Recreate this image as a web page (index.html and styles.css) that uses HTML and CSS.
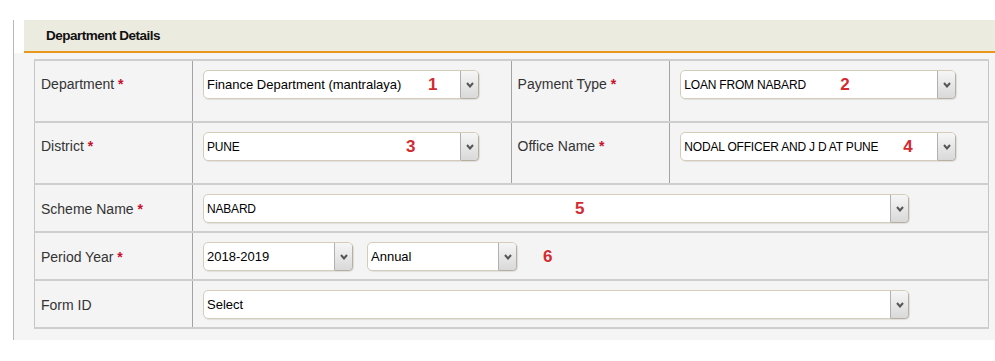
FILE: index.html
```html
<!DOCTYPE html>
<html>
<head>
    <meta charset="UTF-8">
    <meta name="viewport" content="width=device-width, initial-scale=1.0">
    <title>Department Details</title>
    <link rel="stylesheet" href="styles.css">
</head>
<body>

<div class="panel">
    <div class="panel-title">Department Details</div>

    <div class="panel-body">
        <table class="form-table">
            <tr class="row-tall">
                <td class="lbl"><span class="lbl-text">Department <b class="req">*</b></span></td>
                <td class="val">
                    <div class="sel w-md">
                        <select><option>Finance Department (mantralaya)</option></select>
                        <span class="arrow"><svg width="8" height="6" viewBox="0 0 8 6"><polyline points="1,1 4,4.5 7,1" fill="none" stroke="#555" stroke-width="2"/></svg></span>
                        <span class="mark m1">1</span>
                    </div>
                </td>
                <td class="lbl lbl-mid"><span class="lbl-text">Payment Type <b class="req">*</b></span></td>
                <td class="val">
                    <div class="sel w-md">
                        <select class="caps"><option>LOAN FROM NABARD</option></select>
                        <span class="arrow"><svg width="8" height="6" viewBox="0 0 8 6"><polyline points="1,1 4,4.5 7,1" fill="none" stroke="#555" stroke-width="2"/></svg></span>
                        <span class="mark m2">2</span>
                    </div>
                </td>
            </tr>
            <tr class="row-tall">
                <td class="lbl"><span class="lbl-text">District <b class="req">*</b></span></td>
                <td class="val">
                    <div class="sel w-md">
                        <select class="caps"><option>PUNE</option></select>
                        <span class="arrow"><svg width="8" height="6" viewBox="0 0 8 6"><polyline points="1,1 4,4.5 7,1" fill="none" stroke="#555" stroke-width="2"/></svg></span>
                        <span class="mark m3">3</span>
                    </div>
                </td>
                <td class="lbl lbl-mid"><span class="lbl-text">Office Name <b class="req">*</b></span></td>
                <td class="val">
                    <div class="sel w-md">
                        <select class="caps"><option>NODAL OFFICER AND J D AT PUNE</option></select>
                        <span class="arrow"><svg width="8" height="6" viewBox="0 0 8 6"><polyline points="1,1 4,4.5 7,1" fill="none" stroke="#555" stroke-width="2"/></svg></span>
                        <span class="mark m4">4</span>
                    </div>
                </td>
            </tr>
            <tr class="row-short">
                <td class="lbl">Scheme Name <b class="req">*</b></td>
                <td class="val" colspan="3">
                    <div class="sel w-lg">
                        <select class="caps"><option>NABARD</option></select>
                        <span class="arrow"><svg width="8" height="6" viewBox="0 0 8 6"><polyline points="1,1 4,4.5 7,1" fill="none" stroke="#555" stroke-width="2"/></svg></span>
                        <span class="mark m5">5</span>
                    </div>
                </td>
            </tr>
            <tr class="row-short">
                <td class="lbl">Period Year <b class="req">*</b></td>
                <td class="val" colspan="3">
                    <div class="inline-group">
                        <div class="sel w-sm">
                            <select><option>2018-2019</option></select>
                            <span class="arrow"><svg width="8" height="6" viewBox="0 0 8 6"><polyline points="1,1 4,4.5 7,1" fill="none" stroke="#555" stroke-width="2"/></svg></span>
                        </div>
                        <div class="sel w-sm">
                            <select><option>Annual</option></select>
                            <span class="arrow"><svg width="8" height="6" viewBox="0 0 8 6"><polyline points="1,1 4,4.5 7,1" fill="none" stroke="#555" stroke-width="2"/></svg></span>
                        </div>
                        <span class="mark-flow">6</span>
                    </div>
                </td>
            </tr>
            <tr class="row-short">
                <td class="lbl">Form ID</td>
                <td class="val" colspan="3">
                    <div class="sel w-lg">
                        <select><option>Select</option></select>
                        <span class="arrow"><svg width="8" height="6" viewBox="0 0 8 6"><polyline points="1,1 4,4.5 7,1" fill="none" stroke="#555" stroke-width="2"/></svg></span>
                    </div>
                </td>
            </tr>
        </table>
    </div>
</div>

</body>
</html>
```

FILE: styles.css
```css
body {
    margin: 0;
    background-color: #ffffff;
    font-family: "Liberation Sans", Arial, sans-serif;
    color: #333;
}

.panel {
    margin: 20px 0 0 13px;
    border-left: 1px solid #b8b8b8;
    height: 320px;
    box-sizing: border-box;
}

.panel-title {
    margin-left: 10px;
    height: 31px;
    line-height: 31px;
    padding-left: 22px;
    background-color: #ecebdf;
    border-bottom: 2px solid #e8961c;
    font-size: 13.5px;
    font-weight: bold;
    letter-spacing: -0.5px;
    color: #111;
}

.panel-body {
    background-color: #f5f5f5;
    padding: 6px 6px 12px 20px;
}

.form-table {
    border-collapse: collapse;
    width: 955px;
    border: 1px solid #c6c6c6;
}

.form-table td {
    border-top: 2px solid #cecece;
    border-bottom: 2px solid #cecece;
    background-color: #f4f4f4;
}

.form-table td.lbl {
    width: 152px;
    padding-left: 6px;
    border-right: 1px solid #a3a3a3;
    font-size: 14px;
    color: #333;
}

.form-table td.lbl-mid {
    border-left: 1px solid #a3a3a3;
}

.form-table td.val {
    padding-left: 10px;
}

.row-tall td {
    vertical-align: top;
    padding-top: 9px;
    padding-bottom: 22px;
}

.row-tall td.val {
    width: 307px;
}

.lbl-text {
    display: block;
    line-height: 29px;
}

.row-short td {
    vertical-align: middle;
    padding-top: 9px;
    padding-bottom: 8px;
}

.req {
    color: #c8102e;
}

.sel {
    position: relative;
    display: flex;
    height: 29px;
    box-sizing: border-box;
    background-color: #ffffff;
    border: 1px solid #d4ccb8;
    border-radius: 5px;
    box-shadow: 1px 1px 1px rgba(0, 0, 0, 0.08);
}

.w-sm {
    width: 150px;
}

.w-md {
    width: 276px;
}

.w-lg {
    width: 706px;
}

.sel select {
    flex: 1;
    min-width: 0;
    appearance: none;
    -webkit-appearance: none;
    border: none;
    background: transparent;
    font-family: "Liberation Sans", Arial, sans-serif;
    font-size: 13px;
    color: #000;
    padding: 0 3px;
    outline: none;
}

.sel select.caps {
    font-size: 12px;
    letter-spacing: -0.2px;
}

.arrow {
    width: 17px;
    display: flex;
    align-items: center;
    justify-content: center;
    border-left: 1px solid #b0b0b0;
    border-radius: 0 4px 4px 0;
    background: linear-gradient(#f6f6f6, #d9d9d9);
    box-shadow: 1px 1px 1px rgba(0, 0, 0, 0.15);
}

.inline-group {
    display: flex;
    align-items: center;
    gap: 14px;
}

.mark,
.mark-flow {
    color: #d42a30;
    font-weight: bold;
    font-size: 17px;
    line-height: 29px;
}

.mark {
    position: absolute;
    top: -1px;
}

.mark-flow {
    margin-left: 12px;
}

.m1 { left: 224px; }
.m2 { left: 159px; }
.m3 { left: 202px; }
.m4 { left: 222px; }
.m5 { left: 371px; }
```
